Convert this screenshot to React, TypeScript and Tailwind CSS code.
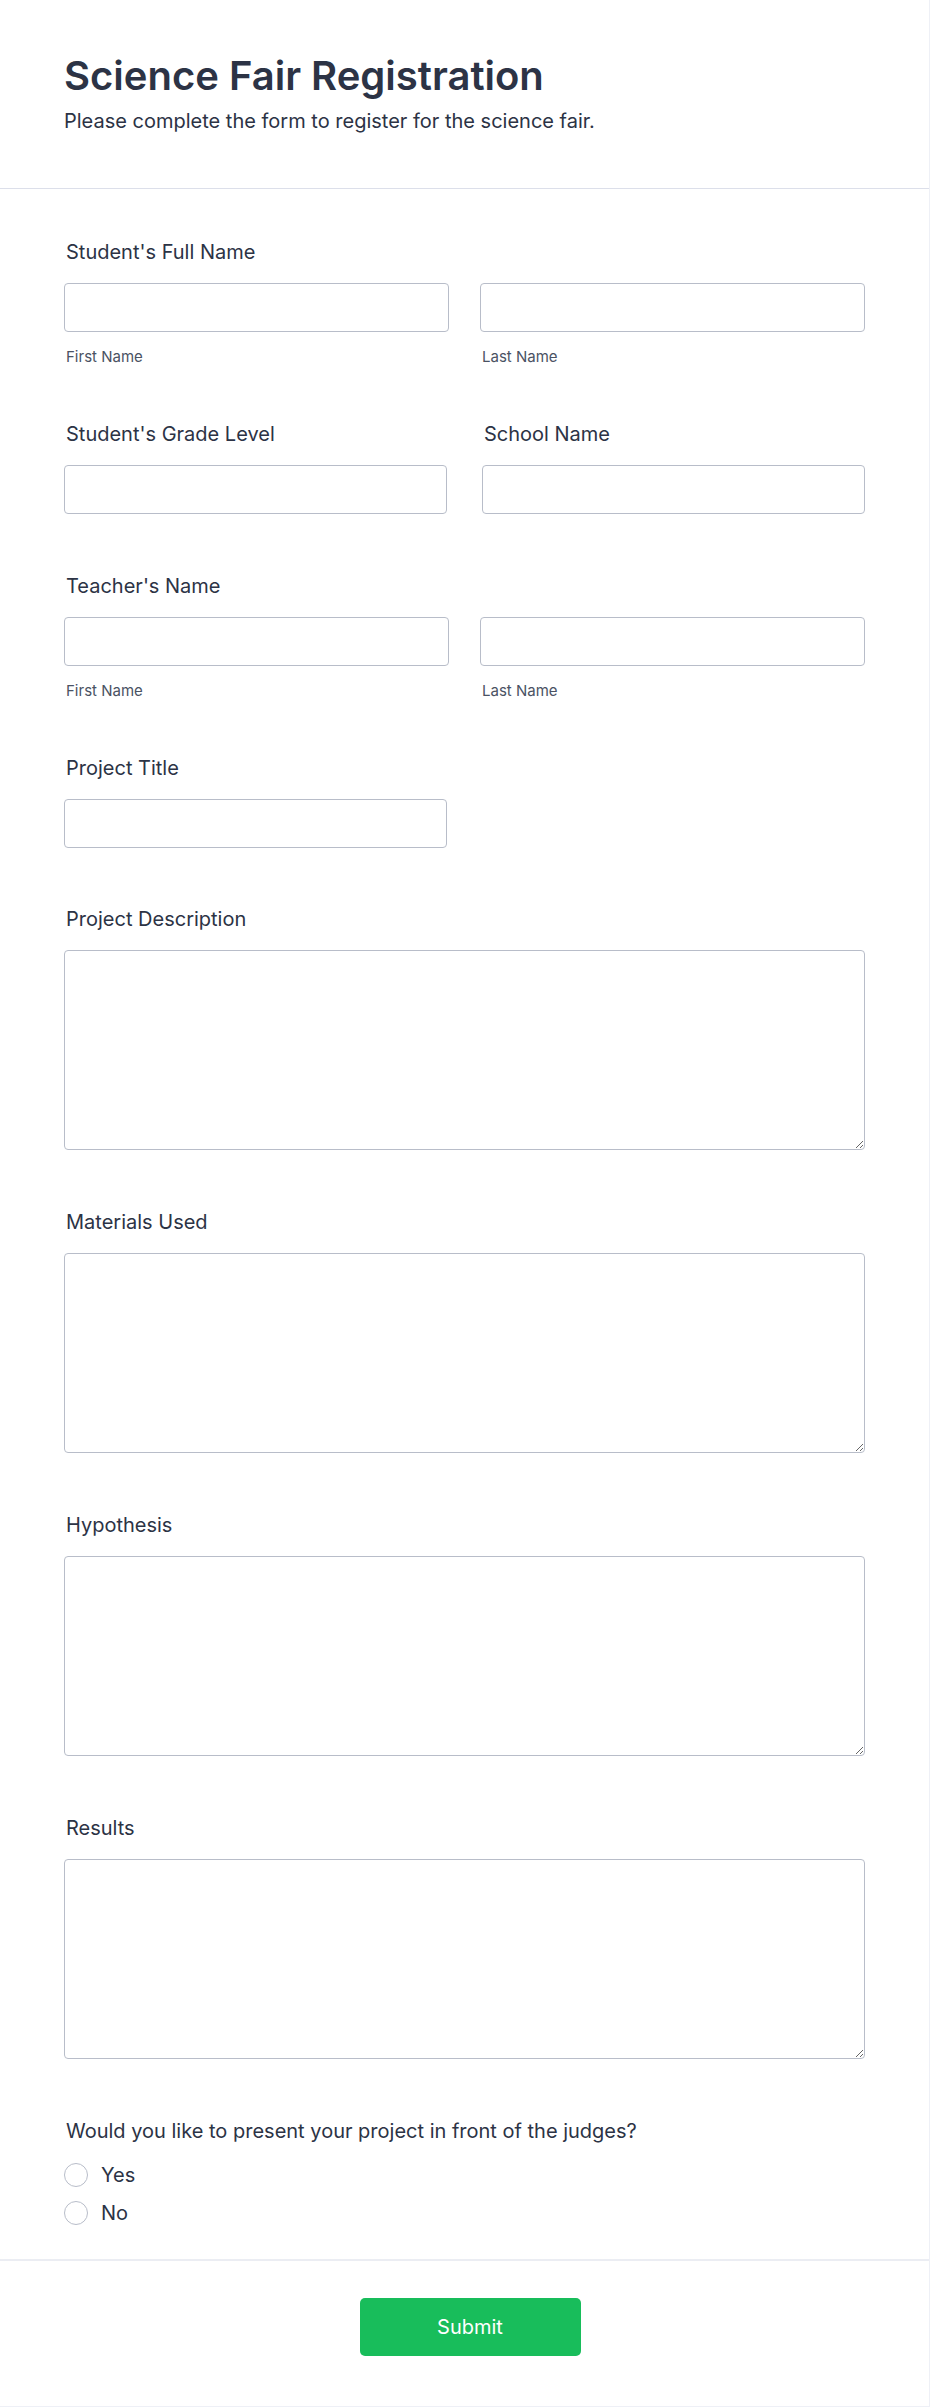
import React from 'react';

const labelCls = 'block text-[20px] leading-[27px] font-normal text-[#2c3345]';
const inputCls = 'block w-full h-[49px] rounded-[4px] border border-[#b8bdc9] bg-white px-3 text-[16px] text-[#2c3345] outline-none';
const subCls = 'mt-[15px] text-[15px] leading-[20px] text-[#4a5263]';

function NameField({ label }: { label: string }) {
  return (
    <div className="pb-[54px]">
      <div className="px-[2px]"><span className={labelCls}>{label}</span></div>
      <div className="mt-[17px] grid grid-cols-2 gap-[31px]">
        <div>
          <input className={inputCls} />
          <div className={subCls + ' px-[2px]'}>First Name</div>
        </div>
        <div>
          <input className={inputCls} />
          <div className={subCls + ' px-[2px]'}>Last Name</div>
        </div>
      </div>
    </div>
  );
}

function Area({ label }: { label: string }) {
  return (
    <div className="pb-[59px]">
      <div className="px-[2px]"><span className={labelCls}>{label}</span></div>
      <textarea className="mt-[17px] block w-full h-[200px] rounded-[4px] border border-[#b8bdc9] bg-white px-3 py-2 text-[16px] text-[#2c3345] outline-none" />
    </div>
  );
}

function Radio({ text }: { text: string }) {
  return (
    <label className="flex items-center gap-[13px] h-[24px]">
      <span className="w-[24px] h-[24px] rounded-full border border-[#b8bdc9] bg-white shrink-0" />
      <span className="text-[20px] leading-[24px] text-[#2c3345]">{text}</span>
    </label>
  );
}

export default function App() {
  return (
    <div className="w-[930px] min-h-[2407px] bg-white border-r border-b border-[#eef0f6] text-[#2c3345]" style={{ fontFamily: 'Inter, "Noto Sans", sans-serif' }}>
      <header className="px-[64px] pt-[52px] pb-[53px] border-b border-[#dcdfea]">
        <h1 className="text-[40px] leading-[48px] font-semibold tracking-normal text-[#2c3345]">Science Fair Registration</h1>
        <p className="mt-[8px] text-[20px] leading-[27px] text-[#2c3345]">Please complete the form to register for the science fair.</p>
      </header>

      <main className="px-[64px] pt-[50px]">
        <NameField label="Student's Full Name" />

        <div className="pb-[59px] grid grid-cols-2 gap-[35px]">
          <div>
            <div className="px-[2px]"><span className={labelCls}>Student's Grade Level</span></div>
            <input className={inputCls + ' mt-[17px]'} />
          </div>
          <div>
            <div className="px-[2px]"><span className={labelCls}>School Name</span></div>
            <input className={inputCls + ' mt-[17px]'} />
          </div>
        </div>

        <NameField label="Teacher's Name" />

        <div className="pb-[58px] grid grid-cols-2 gap-[35px]">
          <div>
            <div className="px-[2px]"><span className={labelCls}>Project Title</span></div>
            <input className={inputCls + ' mt-[17px]'} />
          </div>
        </div>

        <Area label="Project Description" />
        <Area label="Materials Used" />
        <Area label="Hypothesis" />
        <Area label="Results" />

        <div className="pb-[34px]">
          <div className="px-[2px]"><span className={labelCls}>Would you like to present your project in front of the judges?</span></div>
          <div className="mt-[18px] flex flex-col gap-[14px]">
            <Radio text="Yes" />
            <Radio text="No" />
          </div>
        </div>
      </main>

      <footer className="border-t-2 border-[#ebedf3] pt-[37px] pb-[48px] pl-[11px] flex justify-center">
        <button className="w-[221px] h-[58px] rounded-[5px] bg-[#18bd5b] text-white text-[20px] font-normal">Submit</button>
      </footer>
    </div>
  );
}
